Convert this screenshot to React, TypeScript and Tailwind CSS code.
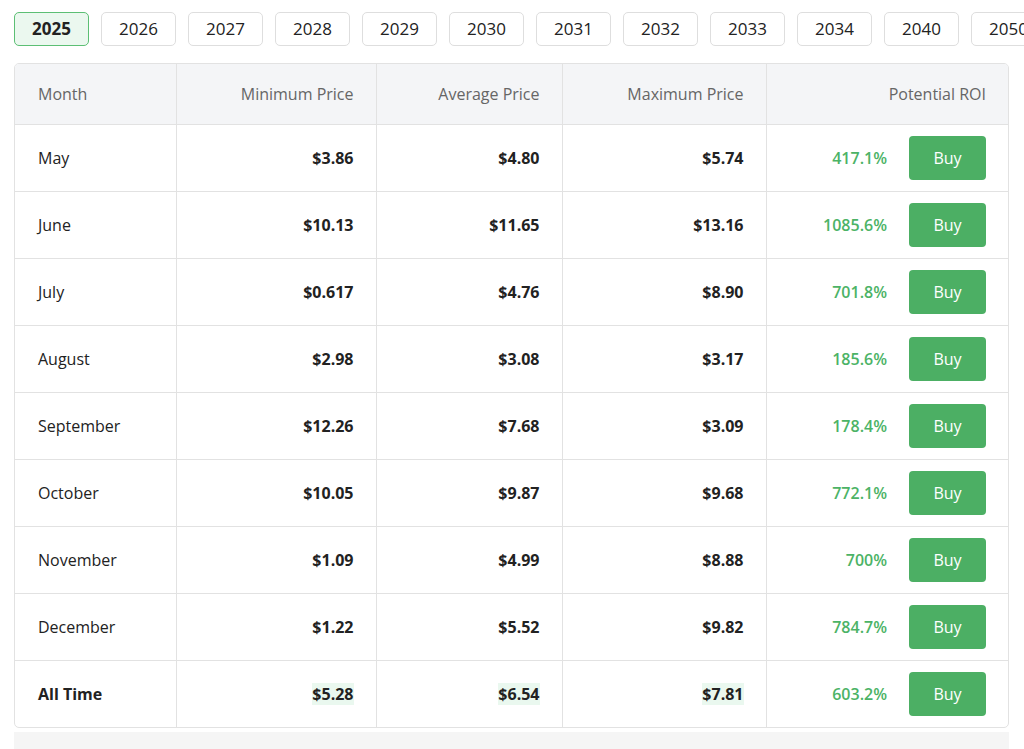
import React from "react";

const years = ["2025","2026","2027","2028","2029","2030","2031","2032","2033","2034","2040","2050"];
const rows = [
  ["May","$3.86","$4.80","$5.74","417.1%"],
  ["June","$10.13","$11.65","$13.16","1085.6%"],
  ["July","$0.617","$4.76","$8.90","701.8%"],
  ["August","$2.98","$3.08","$3.17","185.6%"],
  ["September","$12.26","$7.68","$3.09","178.4%"],
  ["October","$10.05","$9.87","$9.68","772.1%"],
  ["November","$1.09","$4.99","$8.88","700%"],
  ["December","$1.22","$5.52","$9.82","784.7%"],
];

export default function App() {
  return (
    <div className="w-[1024px] h-[749px] overflow-hidden bg-white text-[#222]" style={{ fontFamily: '"Open Sans", Inter, sans-serif' }}>
      <div className="flex gap-[12px] pl-[14px] pt-[12px] whitespace-nowrap">
        {years.map((y, i) => (
          <div key={y} className={`h-[34px] w-[75px] justify-center flex items-center text-[17px] rounded-[5px] border shrink-0 ${i === 0 ? "border-[#5cbf74] bg-[#ebf8ef] font-bold" : "border-[#dedede] bg-white"}`}>{y}</div>
        ))}
      </div>
      <div className="ml-[14px] mt-[17px] w-[995px] border border-[#e2e2e2] rounded-[5px] overflow-hidden">
        <table className="w-full border-collapse text-[16px] table-fixed">
          <colgroup>
            <col className="w-[161px]" /><col className="w-[200px]" /><col className="w-[186px]" /><col className="w-[204px]" /><col />
          </colgroup>
          <thead>
            <tr className="h-[60px] bg-[#f4f5f7] text-[#666]">
              <th className="font-normal text-left pl-[23px] border-r border-b border-[#e2e2e2]">Month</th>
              <th className="font-normal text-right pr-[22px] border-r border-b border-[#e2e2e2]">Minimum Price</th>
              <th className="font-normal text-right pr-[22px] border-r border-b border-[#e2e2e2]">Average Price</th>
              <th className="font-normal text-right pr-[22px] border-r border-b border-[#e2e2e2]">Maximum Price</th>
              <th className="font-normal text-right pr-[22px] border-b border-[#e2e2e2]">Potential ROI</th>
            </tr>
          </thead>
          <tbody>
            {[...rows, ["All Time","$5.28","$6.54","$7.81","603.2%"]].map((r, i) => {
              const last = i === rows.length;
              return (
                <tr key={r[0]} className="h-[67px]">
                  <td className={`pl-[23px] border-r border-[#e2e2e2] ${last ? "font-bold" : "border-b"}`}>{r[0]}</td>
                  {[1,2,3].map(c => (
                    <td key={c} className={`text-right pr-[22px] font-bold border-r border-[#e2e2e2] ${last ? "" : "border-b"}`}>
                      <span className={last ? "bg-[#eaf8ef]" : ""}>{r[c]}</span>
                    </td>
                  ))}
                  <td className={`border-[#e2e2e2] ${last ? "" : "border-b"}`}>
                    <div className="flex items-center justify-end pr-[22px] gap-[22px]">
                      <span className="text-[#4cb366] font-semibold">{r[4]}</span>
                      <button className="w-[77px] h-[44px] rounded-[4px] bg-[#4caf64] text-white text-[16px]">Buy</button>
                    </div>
                  </td>
                </tr>
              );
            })}
          </tbody>
        </table>
      </div>
      <div className="ml-[14px] mt-[4px] w-[995px] h-[20px] bg-[#f5f5f5]" />
    </div>
  );
}
